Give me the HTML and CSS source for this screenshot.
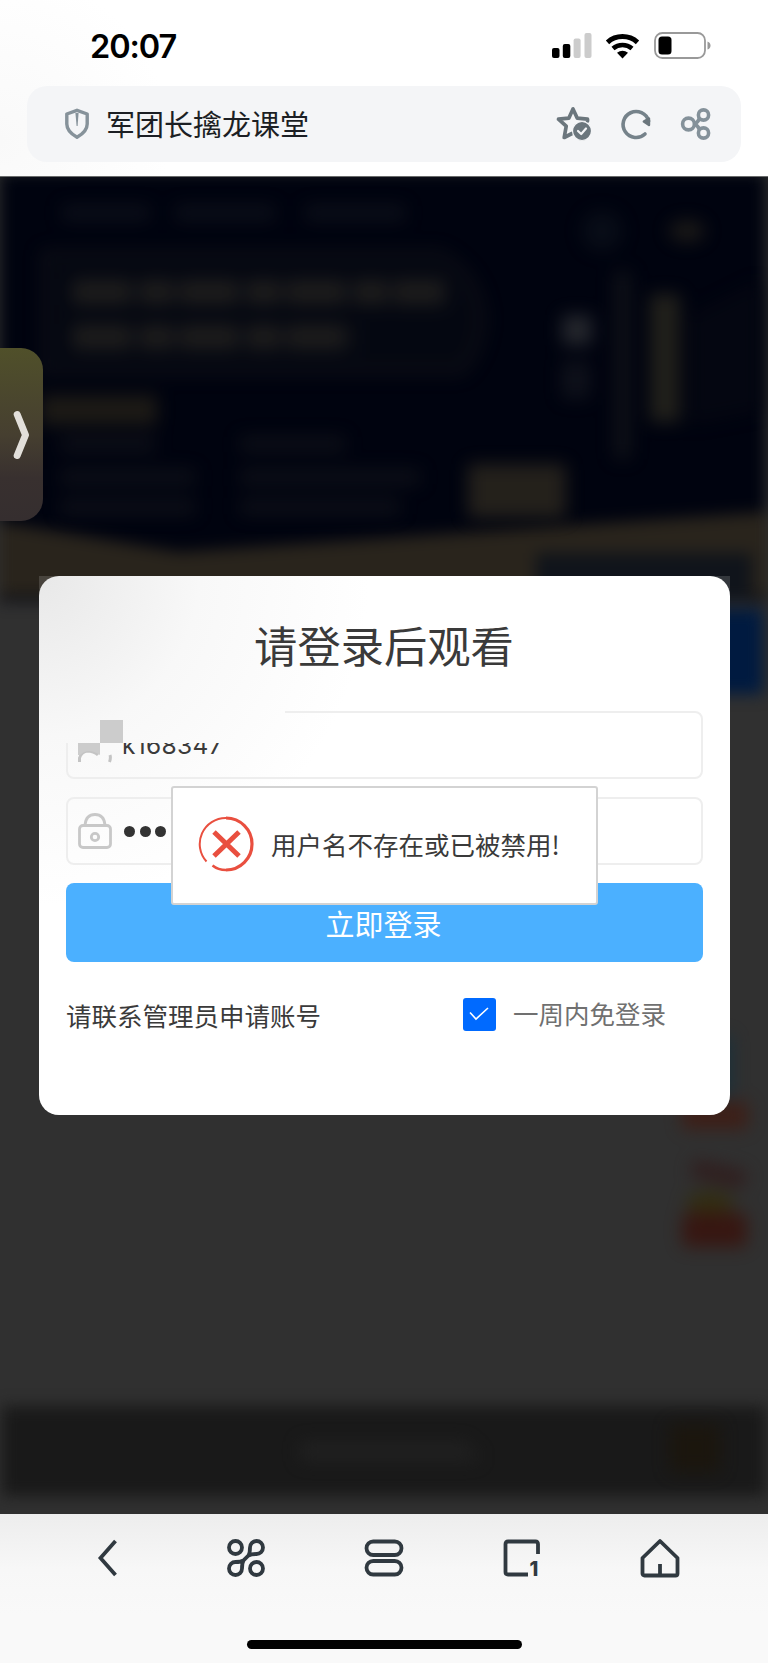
FILE: index.html
```html
<!DOCTYPE html>
<html lang="zh-CN">
<head>
    <meta charset="UTF-8">
    <meta name="viewport" content="width=device-width, initial-scale=1.0">
    <title>军团长擒龙课堂</title>
    <link rel="stylesheet" href="styles.css">
</head>
<body>
    <header class="top">
        <div class="status">
            <span class="time">20:07</span>
            <div class="status-icons">
                <svg width="40" height="26" viewBox="0 0 40 26">
                    <rect x="0" y="15" width="7.5" height="10" rx="2"/>
                    <rect x="10.8" y="11" width="7.5" height="14" rx="2"/>
                    <rect x="21.6" y="5.500" width="7" height="19.500" rx="2" fill="#ccc"/>
                    <rect x="32.500" y="0" width="7" height="25" rx="2" fill="#ccc"/>
                </svg>
                <svg width="36" height="26" viewBox="0 0 36 26">
                    <path d="M2.500 9.300A22.500 22.500 0 0 1 32.500 9.300" fill="none" stroke="#000" stroke-width="5"/>
                    <path d="M8 15.600A14.500 14.500 0 0 1 27 15.600" fill="none" stroke="#000" stroke-width="4.600"/>
                    <path d="M12 19.800Q17.500 15.600 23 19.800L17.500 25.500Z"/>
                </svg>
                <svg width="58" height="28" viewBox="0 0 58 28">
                    <rect x="1" y="1" width="50" height="25" rx="7.500" fill="none" stroke="#999" stroke-width="1.800"/>
                    <rect x="4.500" y="4.500" width="13" height="18" rx="3.500"/>
                    <path d="M53.500 9.500Q56.500 10.500 56.500 13.500T53.500 17.500Z" fill="#999"/>
                </svg>
            </div>
        </div>
        <div class="url-bar">
            <svg class="shield" width="26" height="32" viewBox="0 0 26 32">
                <path d="M13 2.300L23.200 6V16Q23.200 23.500 13 29.300Q2.800 23.500 2.800 16V6Z" fill="none" stroke="#86929a" stroke-width="3.400" stroke-linejoin="round"/>
                <path d="M11.400 5H14.600L13.600 18H12.600Z" fill="#86929a"/>
            </svg>
            <span class="site">军团长擒龙课堂</span>
            <div class="url-icons">
                <svg width="36" height="36" viewBox="0 0 36 36" fill="none" stroke="#6b767d" stroke-width="3.700" stroke-linejoin="round" stroke-linecap="round">
                    <path d="M31.500 15V13.200L21.300 12.200L17 3L12.800 12.200L2.500 13.200L10.200 20.200L8.200 31.500L16 27.500"/>
                    <circle cx="26" cy="25" r="9.500" fill="#6b767d" stroke="#f4f5f7" stroke-width="1.200"/>
                    <path d="M22 25L25.200 28L30 22.500" stroke="#f4f5f7" stroke-width="2.200"/>
                </svg>
                <svg width="32" height="32" viewBox="0 0 32 32" fill="none" stroke="#75828a" stroke-width="3.600" stroke-linecap="round">
                    <path d="M25 26A13 13 0 1 1 28.600 13"/>
                    <path d="M29 10.500V17L23.800 13.600Z" fill="#6b767d" stroke="#6b767d" stroke-width="2.400" stroke-linejoin="round"/>
                </svg>
                <svg width="32" height="34" viewBox="0 0 32 34" fill="none" stroke="#84919a" stroke-width="3.600">
                    <circle cx="8.500" cy="17" r="5.900"/>
                    <circle cx="23.500" cy="8" r="5.100"/>
                    <circle cx="23.500" cy="26" r="5.100"/>
                    <path d="M14 17Q17.500 16 19.500 11.500M14 17Q17.500 18 19.500 22.500"/>
                </svg>
            </div>
        </div>
    </header>

    <main class="page">
        <!-- dimmed course page behind the login box -->
        <svg class="backdrop" width="768" height="1338" viewBox="0 0 768 1338" color-interpolation-filters="sRGB">
            <defs>
                <filter id="b" x="-20%" y="-40%" width="140%" height="180%"><feGaussianBlur stdDeviation="8.500"/></filter>
                <filter id="s" x="-5%" y="-5%" width="110%" height="110%"><feGaussianBlur stdDeviation="7.500"/></filter>
            </defs>
            <rect width="768" height="1338" fill="#303030"/>
            <g filter="url(#s)">
                <path d="M0 -4H766V425H0Z" fill="#00030f"/>
                <path d="M0 346L180 376L768 336V420H0Z" fill="#29241c"/>
                <rect x="536" y="377" width="216" height="48" fill="#10141b"/>
                <rect x="700" y="433" width="63" height="85" fill="#001a40"/>
                <rect x="2" y="1230" width="764" height="90" fill="#191919"/>
            </g>
            <g filter="url(#b)" opacity="0.75">
                <path d="M45 78H440Q480 100 482 145Q478 180 460 195H45Z" fill="#060912" stroke="#111218" stroke-width="8"/>
                <path d="M62 37H150M175 37H275M305 37H405" stroke="#10131c" stroke-width="16" fill="none"/>
                <path d="M72 116H445M72 161H355" stroke="#262420" stroke-width="26" stroke-dasharray="60 7 35 5" fill="none"/>
                <rect x="40" y="219" width="117" height="30" fill="#262218"/>
                <path d="M60 268H155M240 268H345M60 301H195M240 301H420M60 331H195M240 331H400" stroke="#11131a" stroke-width="16" fill="none"/>
                <circle cx="602" cy="55" r="20" fill="#0b101a"/>
                <ellipse cx="687" cy="55" rx="18" ry="11" fill="#24211a"/>
                <rect x="562" y="139" width="30" height="30" fill="#303236"/>
                <rect x="562" y="185" width="28" height="38" fill="#13151e"/>
                <rect x="614" y="95" width="17" height="188" fill="#13151a"/>
                <rect x="650" y="118" width="30" height="128" fill="#2c2a1f"/>
                <path d="M690 140L760 105V235L690 248Z" fill="#060812"/>
                <rect x="468" y="288" width="98" height="54" fill="#302b20"/>
                <rect x="708" y="860" width="24" height="60" fill="#12303e"/>
                <rect x="682" y="926" width="66" height="27" fill="#42190f"/>
                <path d="M692 992L745 1004" stroke="#301818" stroke-width="18"/>
                <ellipse cx="710" cy="1027" rx="24" ry="12" fill="#332c08"/>
                <rect x="682" y="1037" width="65" height="34" rx="6" fill="#3a0e07"/>
                <path d="M300 1275.500H468V1275" stroke="#232323" stroke-width="20" fill="none"/>
                <rect x="670" y="1248" width="50" height="48" fill="#1c150a"/>
            </g>
            <path d="M0 .500H768" stroke="#696b6b"/>
        </svg>

        <div class="side-tab">
            <svg width="18" height="50" viewBox="0 0 18 50">
                <path d="M4.200 4.500L12.500 25L4.200 45.500" fill="none" stroke="#e2dfda" stroke-width="7" stroke-linecap="round" stroke-linejoin="round"/>
            </svg>
        </div>

        <div class="login-wrap">
            <form class="login">
                <h1>请登录后观看</h1>
                <div class="field user">
                    <svg class="person" width="34" height="36" viewBox="0 0 34 36">
                        <path d="M1.500 35V31Q3 25 9 24Q16 24 20 28M32 28Q33 31 31.500 35" fill="none" stroke="#c4c4c4" stroke-width="3"/>
                    </svg>
                    <span class="username">k168347</span>
                    <span class="mask"></span>
                    <span class="block block-a"></span>
                    <span class="block block-b"></span>
                </div>
                <div class="field">
                    <svg width="34" height="36" viewBox="0 0 34 36" fill="none" stroke="#c8c8c8" stroke-width="2.800">
                        <rect x="1.500" y="12.500" width="31" height="22" rx="3.500"/>
                        <path d="M7 12Q8 1.500 17 1.500T27 12"/>
                        <circle cx="17" cy="24" r="3.700"/>
                    </svg>
                    <span class="dots"><i></i><i></i><i></i><i></i></span>
                </div>
                <button type="button">立即登录</button>
                <div class="bottom-row">
                    <span class="contact">请联系管理员申请账号</span>
                    <label class="remember">
                        <span class="check">
                            <svg width="20" height="14" viewBox="0 0 20 14">
                                <path d="M1 5.500L7 12L19 1" fill="none" stroke="#fff" stroke-width="1.600"/>
                            </svg>
                        </span>
                        <span class="week">一周内免登录</span>
                    </label>
                </div>
            </form>

            <div class="toast">
                <svg width="56" height="56" viewBox="0 0 56 56" fill="none" stroke="#e94f3f">
                    <path d="M8.500 45.500A26 26 0 0 1 28 2" stroke-width="2"/>
                    <path d="M28 2A26 26 0 0 1 28 54" stroke-width="3.200"/>
                    <path d="M28 54Q20 54 14.500 49.500" stroke-width="2.400"/>
                    <path d="M16 16L41 40M41 16L16 40" stroke-width="5"/>
                </svg>
                <span>用户名不存在或已被禁用!</span>
            </div>
        </div>
    </main>

    <footer class="toolbar">
        <nav class="nav">
            <svg width="40" height="40" viewBox="0 0 40 40">
                <path d="M27.500 3L12.500 20L27.500 37"/>
            </svg>
            <svg width="40" height="40" viewBox="0 0 40 40">
                <circle cx="9.500" cy="9.500" r="6.500"/>
                <circle cx="30.500" cy="30.500" r="6.500"/>
                <path d="M22.500 17.500Q24 15 24 9.500A6.500 6.500 0 1 1 30.500 16Q25 16 22.500 17.500L17.500 22.500Q16 25 16 30.500A6.500 6.500 0 1 1 9.500 24Q15 24 17.500 22.500"/>
            </svg>
            <svg width="40" height="40" viewBox="0 0 40 40">
                <rect x="2.500" y="3.500" width="35" height="13.500" rx="6.700"/>
                <rect x="2.500" y="23" width="35" height="13.500" rx="6.700"/>
            </svg>
            <svg width="40" height="40" viewBox="0 0 40 40">
                <path d="M36 16V6Q36 3.500 33.500 3.500H6Q3.500 3.500 3.500 6V34Q3.500 36.500 6 36.500H26"/>
                <text class="tab-count" x="27.500" y="38">1</text>
            </svg>
            <svg width="40" height="40" viewBox="0 0 40 40">
                <path d="M20 3L37.500 20V35.500Q37.500 37.500 35.500 37.500H4.500Q2.500 37.500 2.500 35.500V20Z" stroke-linejoin="round"/>
                <path d="M20 26V37"/>
            </svg>
        </nav>
        <div class="home-bar"></div>
    </footer>
</body>
</html>
```
FILE: styles.css
```css
* {
    box-sizing: border-box;
}
body {
    margin: 0;
    width: 768px;
    background: #fff;
    font-family: "Noto Sans CJK SC", "Noto Sans", sans-serif;
    color: #3a3a3a;
}
svg {
    display: block;
    flex-shrink: 0;
}
.top {
    height: 176px;
    padding: 0 27px;
    background: radial-gradient(circle at 0 80%, #f9f9f9, #fff 170px);
}
.status {
    height: 86px;
    padding: 6px 29px 0 63px;
    display: flex;
    align-items: center;
    justify-content: space-between;
}
.time {
    font-family: Inter, sans-serif;
    font-size: 32.5px;
    font-weight: 600;
    letter-spacing: -1.1px;
    color: #000;
}
.status-icons {
    display: flex;
    align-items: center;
    gap: 13px;
}
.url-bar {
    height: 76px;
    padding: 0 29px 0 37px;
    border-radius: 20px;
    background: #f4f5f7;
    display: flex;
    align-items: center;
}
.site {
    margin: -2px 0 0 16px;
    font-size: 29px;
    line-height: 40px;
    color: #1c1f24;
}
.url-icons {
    margin-left: auto;
    display: flex;
    align-items: center;
    gap: 28px;
}
.page {
    position: relative;
    height: 1338px;
    padding-top: 400px;
    background: #303030;
}
.backdrop {
    position: absolute;
    top: 0;
    left: 0;
}
.side-tab {
    position: absolute;
    top: 172px;
    left: 0;
    width: 43px;
    height: 173px;
    padding-left: 13px;
    border-radius: 0 22px 22px 0;
    background: linear-gradient(#50502a, #463f30 50%, #38302f 75%, #352e2f);
    display: flex;
    align-items: center;
}
.login-wrap {
    position: relative;
    width: 691px;
    height: 539px;
    margin-left: 39px;
    border-radius: 0 0 20px 20px;
    background: rgba(255, 255, 255, 0.15);
}
.login {
    height: 539px;
    padding: 38px 27px 0;
    border-radius: 20px;
    background: radial-gradient(circle at 0 0, #e8e8e8, #f8f8f8 160px, #fff 330px);
}
.login h1 {
    margin: 0 1px 37px 0;
    font-size: 43.3px;
    font-weight: 400;
    line-height: 60px;
    text-align: center;
}
.field {
    position: relative;
    height: 68px;
    margin-bottom: 18px;
    padding: 0 10px;
    border: 2px solid #eee;
    border-radius: 8px;
    display: flex;
    align-items: center;
}
.username {
    margin-left: 10px;
    font-family: Inter, sans-serif;
    font-size: 24.5px;
    line-height: 30px;
    letter-spacing: 0.3px;
}
/* same gradient as .login, shifted so the two line up */
.mask {
    position: absolute;
    top: -4px;
    left: -4px;
    width: 221px;
    height: 34px;
    background: radial-gradient(circle at -25px -133px, #e8e8e8, #f8f8f8 160px, #fff 330px);
}
.block {
    position: absolute;
    background: #ccc;
}
.block-a {
    top: 7px;
    left: 32px;
    width: 23px;
    height: 23px;
}
.block-b {
    top: 30px;
    left: 10px;
    width: 22px;
    height: 12px;
    clip-path: path("M0 0H22V12Q10 4 2 12H0Z");
}
.dots {
    margin-left: 12px;
    display: flex;
    gap: 4.5px;
}
.dots i {
    width: 11px;
    height: 11px;
    border-radius: 50%;
    background: #333;
}
.login button {
    display: block;
    width: 100%;
    height: 79px;
    padding: 1px 2px 0 0;
    border: none;
    border-radius: 8px;
    background: #4bb0ff;
    color: #fff;
    font-family: inherit;
    font-size: 29px;
}
.bottom-row {
    height: 104px;
    display: flex;
    align-items: center;
    justify-content: space-between;
    font-size: 25.5px;
}
.remember {
    padding-right: 37px;
    display: flex;
    align-items: center;
    gap: 17px;
    color: #707070;
}
.week {
    margin-top: -4px;
}
.check {
    width: 33px;
    height: 33px;
    border-radius: 3px;
    background: #006aff;
    display: flex;
    align-items: center;
    justify-content: center;
}
.toast {
    position: absolute;
    top: 210px;
    left: 132px;
    width: 427px;
    height: 119px;
    padding: 0 0 4px 25px;
    border: 2px solid #d3d3d3;
    border-radius: 3px;
    background: #fff;
    display: flex;
    align-items: center;
    gap: 17px;
    font-size: 25.5px;
    white-space: nowrap;
}
.toolbar {
    height: 149px;
    padding: 19px 39px 0;
    background: linear-gradient(#ededed, #f7f7f7 55px, #f9f9f9 100px);
}
.nav {
    height: 50px;
    display: grid;
    grid-template-columns: repeat(5, 1fr);
    align-items: center;
    justify-items: center;
}
.nav svg {
    overflow: visible;
    fill: none;
    stroke: #303940;
    stroke-width: 3.8;
}
.nav .tab-count {
    font-family: Inter, sans-serif;
    font-size: 20px;
    font-weight: 800;
    fill: #303940;
    stroke: none;
}
.home-bar {
    width: 275px;
    height: 9px;
    margin: 57px auto 0;
    border-radius: 5px;
    background: #000;
}
```
